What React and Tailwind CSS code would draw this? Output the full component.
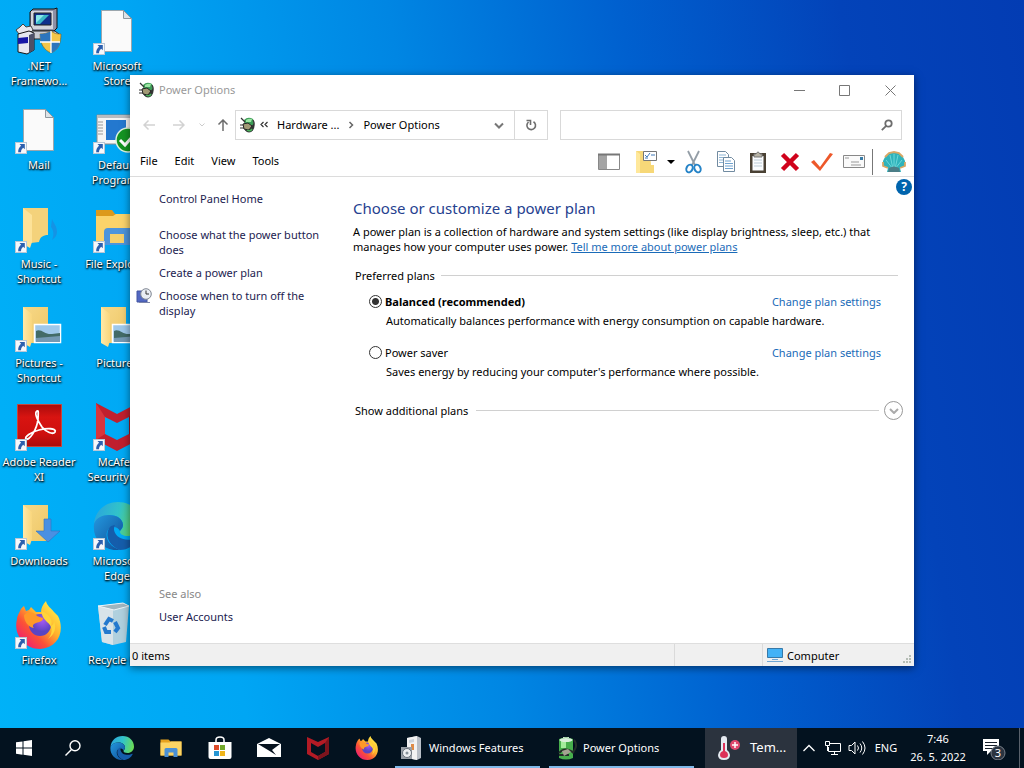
import { useState } from "react";

function ShortcutArrow() {
  return (
    <svg viewBox="0 0 12 12" className="absolute bottom-0 left-0 size-3">
      <rect width="12" height="12" fill="#f6f8fb" />
      <rect x=".5" y=".5" width="11" height="11" fill="none" stroke="#b9c7d6" />
      <path d="M4.500 2h5.300v5.300L8.200 5.800C6.700 7 6 8.300 6 10.200H3.200C3 7.500 4.200 5.200 6.100 3.700z" fill="#2c5fae" />
    </svg>
  );
}

function DotNetIcon() {
  return (
    <svg viewBox="0 0 48 48" className="size-12">
      <path d="M18 2h21l3-1v20l-3 3H15V5z" fill="#8d90a5" stroke="#111" />
      <path d="M16 4h22v18H16z" fill="#d4d5dd" />
      <path d="M19 6h17v12H19z" fill="#10308c" stroke="#222" />
      <path d="M21 8h13l-9 9h-4z" fill="#39b9c9" />
      <path d="M22 8h7l-8 8V9z" fill="#8ae8ea" />
      <path d="M12 24h28l5 4v4H18z" fill="#c9cad2" stroke="#222" />
      <path d="M5 20l3-3 3 3 5-1 2 4-4 4H4l-3-4z" fill="#e8e8ef" stroke="#444" />
      <path d="M3 27l11-3 5 2v17l-7 4-9-2z" fill="#e7e8f0" stroke="#161616" />
      <path d="M3 31l10-1v6l-10 1z" fill="#1717a6" />
      <path d="M14 28l5-2v17l-5 3z" fill="#4e5068" />
      <path d="M36 24c4 3 7 3 10 3 0 10-3 16-10 19-7-3-11-9-11-19 4 0 8-1 11-3z" fill="#f3c64a" stroke="#765d20" strokeWidth=".6" />
      <path d="M36 24v11H25.500L25 27c4 0 8-1 11-3zM36 35h9c-1 5-4 9-9 11z" fill="#2c75bd" />
      <path d="M36 24v22M25 35h20" stroke="#fff" strokeWidth="1.300" />
    </svg>
  );
}

function PageIcon() {
  return (
    <svg viewBox="0 0 48 48" className="size-12">
      <path d="M8.500 3.500h22l8 8v33h-30z" fill="#fafafa" stroke="#9ba6ad" />
      <path d="M30.500 3.500v8h8z" fill="#dde3e7" stroke="#8e979e" />
    </svg>
  );
}

function DefaultProgramsIcon() {
  return (
    <svg viewBox="0 0 48 48" className="size-12">
      <path d="M4 9h42v29H4z" fill="#f5f5f5" stroke="#8a8a8a" />
      <path d="M4 9h42v3H4z" fill="#b9bcc0" />
      <path d="M13 14h20v20H13z" fill="#2378cf" />
      <path d="M5 16h5M5 19h5M5 22h5M5 25h5M5 28h5" stroke="#999" />
      <circle cx="35" cy="34" r="12" fill="#159422" stroke="#dff2df" strokeWidth="1.500" />
      <path d="M27 34l5 5 8-9" fill="none" stroke="#fff" strokeWidth="3" />
    </svg>
  );
}

function OpenFolder({ children }) {
  return (
    <svg viewBox="0 0 48 48" className="size-12">
      <defs>
        <linearGradient id="folder-front" x1="0" x2="1" y1="0" y2="0">
          <stop offset="0" stopColor="#ffe9a8" />
          <stop offset="1" stopColor="#f9d67c" />
        </linearGradient>
        <linearGradient id="folder-back" x1="0" x2="1" y1="0" y2="1">
          <stop offset="0" stopColor="#f7d888" />
          <stop offset="1" stopColor="#eec765" />
        </linearGradient>
      </defs>
      <path d="M8 3h25v36H8z" fill="url(#folder-back)" />
      <path d="M8 3l9 7v27l-2 6-7-4z" fill="url(#folder-front)" />
      {children}
    </svg>
  );
}

function MusicIcon() {
  return (
    <svg viewBox="0 0 48 48" className="size-12">
      <path d="M37 14c2 5 5 7 5 13 0 3-2 6-5 8 2-5 2-9-1-13z" fill="#1593e4" />
      <path d="M8 3h25v27c-5 0-8 2-9 7l-8 1H8z" fill="#f4d27b" />
      <path d="M8 3l9 7v27l-2 6-7-4z" fill="#fde298" />
    </svg>
  );
}

function PicturesIcon() {
  return (
    <OpenFolder>
      <path d="M19.500 20.500h26v18h-26z" fill="#9fc8ea" stroke="#fff" strokeWidth="1.500" />
      <path d="M21 27c5-3 9 4 16 3l8-1v9H21z" fill="#436b67" />
      <path d="M21 34l24-2v6H21z" fill="#7599b3" />
    </OpenFolder>
  );
}

function DownloadsIcon() {
  return (
    <OpenFolder>
      <path d="M29 17h7v12h9L33 40 21 29h8z" fill="#4a90e2" stroke="#2f72c1" strokeWidth=".6" />
    </OpenFolder>
  );
}

function ExplorerIcon() {
  return (
    <svg viewBox="0 0 48 48" className="size-6">
      <path d="M3 7h16l4 4h22v28H3z" fill="#e6a21f" />
      <path d="M3 13h18l3-2h21v28H3z" fill="#fcd464" />
      <path d="M11 42V27q0-3 3-3h20q3 0 3 3v15h-8v-9H19v9z" fill="#4a90d5" />
    </svg>
  );
}

function DesktopExplorerIcon() {
  return (
    <svg viewBox="0 0 48 48" className="size-12">
      <path d="M3 5h16l3 4h24v29H3z" fill="#dc9a1c" />
      <path d="M3 11h17l3-2h23v29H3z" fill="#fbd36a" />
      <path d="M11 40V27q0-4 4-4h31v17z" fill="#4c94dc" />
      <path d="M17 29h14v9H17z" fill="#f5d06c" />
    </svg>
  );
}

function AdobeIcon() {
  return (
    <svg viewBox="0 0 48 48" className="size-12">
      <defs>
        <linearGradient id="adobe" x1="0" x2="0" y1="0" y2="1">
          <stop offset="0" stopColor="#a80c0c" />
          <stop offset=".3" stopColor="#d81411" />
          <stop offset=".7" stopColor="#cf100e" />
          <stop offset="1" stopColor="#a90c0c" />
        </linearGradient>
      </defs>
      <path d="M2.500 1.500h44v42h-44z" fill="url(#adobe)" stroke="#c8453b" />
      <path
        d="M22 8c-3 2 1 10 5 16 4 5 11 8 13 5 2-4-8-4-16-2-8 2-15 7-13 9 3 2 11-9 12-20 0-4 1-9-1-8z"
        fill="none"
        stroke="#fff"
        strokeWidth="1.800"
      />
    </svg>
  );
}

function McAfeeIcon() {
  return (
    <svg viewBox="0 0 48 48" className="size-12">
      <path d="M3 0l21 11L45 0v37L24 48 3 37zM12 14v17l12 6 12-6V14l-12 6z" fill="#c01f2e" fillRule="evenodd" />
      <path d="M3 0l9 14v17l-9 6z" fill="#d8353d" />
      <path d="M45 0l-9 14v17l9 6z" fill="#9a1622" />
    </svg>
  );
}

function McAfeeTaskIcon() {
  return (
    <svg viewBox="0 0 24 24" className="size-6">
      <path d="M1 1l11 5 11-5v17l-11 6-11-6zM5 7v9l7 4 7-4V7l-7 4z" fill="#b31b25" fillRule="evenodd" />
      <path d="M19 7l4-6v17l-11 6v-4l7-4z" fill="#7d141d" />
    </svg>
  );
}

function EdgeIcon({ className }) {
  return (
    <svg viewBox="0 0 48 48" className={className}>
      <defs>
        <linearGradient id="edge-top" x1="0" x2="1" y1=".3" y2=".5">
          <stop offset="0" stopColor="#2aa5dd" />
          <stop offset=".5" stopColor="#32c3c9" />
          <stop offset="1" stopColor="#6bdc55" />
        </linearGradient>
        <linearGradient id="edge-mid" x1="0" x2="1" y1="0" y2="1">
          <stop offset="0" stopColor="#2398df" />
          <stop offset="1" stopColor="#104d96" />
        </linearGradient>
      </defs>
      <path d="M1 22C2 9 12 0 25 0c14 0 23 10 23 21 0 8-6 13-13 13-5 0-8-2-8-4s3-3 3-7c0-6-6-10-13-10C9 13 3 17 1 22z" fill="url(#edge-top)" />
      <path d="M1 22c2-6 8-9 15-9 8 0 14 4 14 10 0 3-2 4-3 6-3-6-11-5-13 1-2 7 3 15 13 18C12 50-1 38 1 22z" fill="url(#edge-mid)" />
      <path d="M17 25c-6 8-1 19 10 23 8 0 15-5 18-11 1-2 0-2-2-1-9 4-20 1-22-8 0-2 0-4 1-5-2 0-4 1-5 2z" fill="#155dab" />
    </svg>
  );
}

function FirefoxIcon({ className }) {
  return (
    <svg viewBox="0 0 48 48" className={className}>
      <defs>
        <linearGradient id="fox-body" x1=".9" x2=".15" y1=".1" y2=".9">
          <stop offset="0" stopColor="#fff04b" />
          <stop offset=".4" stopColor="#ffb02c" />
          <stop offset=".7" stopColor="#fb5037" />
          <stop offset="1" stopColor="#ee1f72" />
        </linearGradient>
        <radialGradient id="fox-globe" cx=".6" cy=".3">
          <stop offset="0" stopColor="#a65af2" />
          <stop offset="1" stopColor="#5a44c2" />
        </radialGradient>
      </defs>
      <path d="M5 10c1-3 3-4 4-5l2 5 3-1 2-3 5 5h5c0-4 2-8 5-11 1 5 5 7 8 11l4 4c7 14 1 32-18 33C9 48-2 33 2 18c0-3 2-6 3-8z" fill="url(#fox-body)" />
      <circle cx="25" cy="24" r="11" fill="url(#fox-globe)" />
      <path d="M9 14c5-4 9-3 12 0 2 2 5 2 7 3 0 3-3 4-7 5-3 1-4 3-2 5-6-1-10-7-10-13z" fill="#ff9928" />
      <path d="M27 10c8 4 11 9 9 15 2-1 3-3 3-5 3 7 0 14-6 18 6-7 4-13-1-17-3-3-6-7-5-11z" fill="#ffd43a" />
    </svg>
  );
}

function RecycleIcon() {
  return (
    <svg viewBox="0 0 48 48" className="size-12">
      <path d="M5 5l25-3 6 3-3 36-13 3-11-3z" fill="#c3d4dc" opacity=".9" />
      <path d="M5 5l15 3v36L9 41z" fill="#d8e3e9" />
      <path d="M5 5l25-3 6 3-15 4z" fill="#9fb5bf" stroke="#eef5f8" />
      <path d="M12 24l4-6 4 2M22 21l3 6-3 4M18 31h-5l-2-5" fill="none" stroke="#2479ce" strokeWidth="4" />
    </svg>
  );
}

function PlugIcon() {
  return (
    <svg viewBox="0 0 16 16" className="size-4 shrink-0">
      <ellipse cx="10" cy="9" rx="5.500" ry="6.500" fill="#343c38" />
      <path d="M5 3q4-4 9-1l1 5q-3 3-9 1z" fill="#3d9c57" />
      <path d="M7 3q3-2 6-1l-1 3H7z" fill="#9ce5a3" />
      <path d="M2 1l4 4M1 8h4M1 11h4M14 3q3 5-2 9" fill="none" stroke="#333" strokeWidth="1.200" />
      <path d="M4 7l5-1 4 3-3 4-5-1z" fill="#a29a76" stroke="#252525" />
      <path d="M8 13q3 2 5-1" stroke="#49b35a" fill="none" strokeWidth="1.500" />
    </svg>
  );
}

const columns = [
  [
    { label: ".NET Framewo...", icon: <DotNetIcon /> },
    { label: "Mail", icon: <PageIcon />, shortcut: true },
    { label: "Music - Shortcut", icon: <MusicIcon />, shortcut: true },
    { label: "Pictures - Shortcut", icon: <PicturesIcon />, shortcut: true },
    { label: "Adobe Reader XI", icon: <AdobeIcon />, shortcut: true },
    { label: "Downloads", icon: <DownloadsIcon />, shortcut: true },
    { label: "Firefox", icon: <FirefoxIcon className="size-12" />, shortcut: true },
  ],
  [
    { label: "Microsoft Store", icon: <PageIcon />, shortcut: true },
    { label: "Default Programs", icon: <DefaultProgramsIcon />, shortcut: true },
    { label: "File Explorer", icon: <DesktopExplorerIcon />, shortcut: true },
    { label: "Pictures", icon: <PicturesIcon /> },
    { label: "McAfee Security S...", icon: <McAfeeIcon />, shortcut: true },
    { label: "Microsoft Edge", icon: <EdgeIcon className="size-12" />, shortcut: true },
    { label: "Recycle Bin", icon: <RecycleIcon /> },
  ],
];

function DesktopIcons() {
  return (
    <div className="flex gap-[2px] pl-px">
      {columns.map((items, i) => (
        <div key={i} className="flex w-[76px] flex-col">
          {items.map((item) => (
            <button key={item.label} className="flex h-[99px] flex-col items-center pt-[7px]">
              <span className="relative size-12">
                {item.icon}
                {item.shortcut && <ShortcutArrow />}
              </span>
              <span className="mt-[3px] text-center leading-[15px] text-white [text-shadow:0_1px_2px_#000,1px_1px_2px_#000]">
                {item.label}
              </span>
            </button>
          ))}
        </div>
      ))}
    </div>
  );
}

function TitleBar() {
  return (
    <header className="flex h-[30px] shrink-0 items-center pl-2 text-[#999]">
      <PlugIcon />
      <h1 className="ml-[5px] flex-1">Power Options</h1>
      <div className="flex text-[#777]">
        <button aria-label="Minimize" className="flex w-[45px] justify-center">
          <svg viewBox="0 0 11 11" className="size-[11px]" fill="none" stroke="currentColor"><path d="M0 5.500h11" /></svg>
        </button>
        <button aria-label="Maximize" className="flex w-[45px] justify-center">
          <svg viewBox="0 0 11 11" className="size-[11px]" fill="none" stroke="currentColor"><path d="M.5.5h10v10H.5z" /></svg>
        </button>
        <button aria-label="Close" className="flex w-[47px] justify-center">
          <svg viewBox="0 0 11 11" className="size-[11px]" fill="none" stroke="currentColor"><path d="M.5.5l10 10M10.500.5l-10 10" /></svg>
        </button>
      </div>
    </header>
  );
}

function NavArrow({ label, className, d }) {
  return (
    <button aria-label={label} className={className}>
      <svg viewBox="0 0 12 12" className="size-3" fill="none" stroke="currentColor" strokeWidth="1.500">
        <path d={d} />
      </svg>
    </button>
  );
}

function AddressBar() {
  return (
    <nav className="flex h-10 shrink-0 items-center pr-3 pl-[13px]">
      <NavArrow label="Back" className="w-[30px] text-[#d2d2d2]" d="M12 6H1M5.500 1.500L1 6l4.500 4.500" />
      <NavArrow label="Forward" className="w-[26px] text-[#d2d2d2]" d="M0 6h11M6.500 1.500L11 6l-4.500 4.500" />
      <button aria-label="Recent locations" className="w-[18px] text-[#ccc]">
        <svg viewBox="0 0 6 6" className="size-[6px]" fill="none" stroke="currentColor"><path d="M.5 1.500L3 4l2.500-2.500" /></svg>
      </button>
      <NavArrow label="Up" className="w-[18px] text-[#6d6d6d]" d="M6 12V1M1.500 5.500L6 1l4.500 4.500" />
      <div className="flex h-[30px] w-[313px] shrink-0 items-center border border-[#d9d9d9] pl-[3px]">
        <PlugIcon />
        <svg viewBox="0 0 8 8" className="mx-[5px] size-2" fill="none" stroke="#333" strokeWidth="1.200"><path d="M3.500 1L1 3.500 3.500 6M7.500 1L5 3.500 7.500 6" /></svg>
        <button className="ml-1 whitespace-nowrap">Hardware ...</button>
        <svg viewBox="0 0 6 8" className="mx-[9px] h-2 w-[6px]" fill="none" stroke="#666" strokeWidth="1.500"><path d="M1.500 1l3 3-3 3" /></svg>
        <button className="whitespace-nowrap">Power Options</button>
        <button aria-label="Previous locations" className="mr-[9px] ml-auto text-[#777]">
          <svg viewBox="0 0 12 12" className="size-3" fill="none" stroke="currentColor" strokeWidth="2"><path d="M2 4.500l4 4 4-4" /></svg>
        </button>
        <button aria-label="Refresh" className="flex h-full w-[33px] items-center justify-center border-l border-[#d9d9d9] text-[#6d6d6d]">
          <svg viewBox="0 0 12 12" className="size-3" fill="none" stroke="currentColor" strokeWidth="1.600">
            <path d="M8.500 2.700A4.300 4.300 0 1 1 3.500 3M1.500 1.500h4V6" />
          </svg>
        </button>
      </div>
      <label className="ml-3 flex h-[30px] flex-1 items-center border border-[#d9d9d9] pr-2">
        <input aria-label="Search" className="min-w-0 flex-1 px-2 outline-none" />
        <svg viewBox="0 0 12 12" className="size-3" fill="none" stroke="#6d6d6d" strokeWidth="1.800">
          <circle cx="7.500" cy="4.500" r="3.200" />
          <path d="M5.200 6.800L.8 11.200" />
        </svg>
      </label>
    </nav>
  );
}

function Tool({ label, children, className = "w-8" }) {
  return (
    <button aria-label={label} className={`flex justify-center ${className}`}>
      <svg viewBox="0 0 24 24" className="size-6">{children}</svg>
    </button>
  );
}

function MenuBar() {
  return (
    <div className="flex h-8 shrink-0 items-center border-b border-[#dcdcdc] pt-[2px] pr-[7px] pl-[10px]">
      <div className="flex flex-1 gap-[17px]">
        <button>File</button>
        <button>Edit</button>
        <button>View</button>
        <button>Tools</button>
      </div>
      <div className="flex items-center">
        <Tool label="Navigation pane" className="mr-1 w-[34px]">
          <path d="M1.500 4.500h21v15h-21z" fill="#fff" stroke="#888" />
          <path d="M2 5h8v14H2z" fill="#a4a4a4" />
          <path d="M1 4.500h22" stroke="#777" strokeWidth="2" />
        </Tool>
        <Tool label="Folder options" className="w-[34px]">
          <path d="M1 1h14l1 14h3v8H1z" fill="#f7d878" />
          <path d="M1 1l4 3v19H1z" fill="#ffe89b" />
          <path d="M8.500 1.500h13v9h-13z" fill="#fff" stroke="#777" />
          <path d="M10 5l2 2 3-4M16 5h4M10 8h3" fill="none" stroke="#3f78b7" />
        </Tool>
        <button aria-label="More layouts" className="flex w-[14px] justify-center">
          <svg viewBox="0 0 8 4" className="h-1 w-2"><path d="M0 0h8L4 4z" /></svg>
        </button>
        <Tool label="Cut">
          <path d="M6 1l7 14M17 1l-7 14" stroke="#939da6" strokeWidth="1.800" />
          <ellipse cx="7.500" cy="18.500" rx="3" ry="4" transform="rotate(25 7.500 18.500)" fill="none" stroke="#2583c7" strokeWidth="2" />
          <ellipse cx="15.500" cy="18.500" rx="3" ry="4" transform="rotate(-25 15.500 18.500)" fill="none" stroke="#2583c7" strokeWidth="2" />
        </Tool>
        <Tool label="Copy">
          <path d="M3.500 1.500h8l3 3v12h-11z" fill="#fff" stroke="#718ba1" />
          <path d="M5 5h7M5 7.500h7M5 10h7M5 12.500h7" stroke="#8db5d6" />
          <path d="M9.500 7.500h8l3 3v11h-11z" fill="#fff" stroke="#718ba1" />
          <path d="M11 11h6M11 13.500h8M11 16h8M11 18.500h8" stroke="#6fa2cf" />
        </Tool>
        <Tool label="Paste">
          <path d="M4 3h16v20H4z" fill="#4a4134" />
          <path d="M6.500 6h11v14.500h-11z" fill="#fafcfe" />
          <path d="M8 4h2q2-4 4 0h2v3H8z" fill="#b8b3a5" stroke="#777" />
          <path d="M8 10h8M8 13h8M8 16h8" stroke="#bccbd6" />
        </Tool>
        <Tool label="Delete">
          <path d="M4.500 4.500l15 15M19.500 4.500l-15 15" stroke="#d0021b" strokeWidth="4.500" />
        </Tool>
        <Tool label="Properties">
          <path d="M1 12l3-2 6 7L20 3l3 1-13 17z" fill="#ed582a" />
        </Tool>
        <Tool label="Rename">
          <path d="M1.500 5.500h21v12h-21z" fill="#fafafa" stroke="#888" />
          <path d="M3 8h4M9 12h8M9 15h10" stroke="#999" />
          <path d="M18 7h3v3h-3z" fill="#397da8" />
        </Tool>
        <span className="mx-[2px] h-[26px] w-px bg-[#777]" />
        <Tool label="Shell options" className="ml-[6px] w-[26px]">
          <path d="M6 18l-5-2v-5l2-4 4-4 5-1 5 1 4 4 2 4v5l-5 2 1 4H5z" fill="#2fb3bb" />
          <path d="M1 12v4l5 2M23 12v4l-5 2M3 7l4-4 5-1 5 1 4 4" fill="none" stroke="#d9a765" strokeWidth="1.800" />
          <path d="M11 19L4 10M11 19L8 5M12 19V4M13 19l3-14M13 19l7-9" stroke="#6cd7d9" />
          <path d="M7 18q5-3 10 0l1 4H6z" fill="#4c7e87" />
        </Tool>
      </div>
    </div>
  );
}

function Sidebar() {
  return (
    <aside className="flex w-[223px] shrink-0 flex-col pt-[14px] pr-6 pb-[19px] pl-[29px] leading-[15px] text-[#1c1c50]">
      <a href="#home">Control Panel Home</a>
      <a href="#button" className="mt-[21px]">Choose what the power button does</a>
      <a href="#create" className="mt-2">Create a power plan</a>
      <a href="#display" className="relative mt-2">
        <svg viewBox="0 0 16 16" className="absolute top-0 -left-[23px] size-4">
          <path d="M1 3h10v11H1z" fill="#5368c2" stroke="#4354a2" />
          <path d="M3 14h11v1H3z" fill="#7d86aa" />
          <circle cx="10" cy="6" r="5.300" fill="#e9edf3" stroke="#818894" />
          <path d="M10 2.500V6h3" fill="none" stroke="#333" />
        </svg>
        Choose when to turn off the display
      </a>
      <p className="mt-auto text-[#888]">See also</p>
      <a href="#accounts" className="mt-2">User Accounts</a>
    </aside>
  );
}

const plans = [
  {
    id: "balanced",
    name: "Balanced (recommended)",
    text: "Automatically balances performance with energy consumption on capable hardware.",
  },
  {
    id: "saver",
    name: "Power saver",
    text: "Saves energy by reducing your computer's performance where possible.",
  },
];

function PowerPlans() {
  const [selected, setSelected] = useState("balanced");

  return (
    <main className="relative min-w-0 flex-1 pt-5 leading-[15px]">
      <button aria-label="Help" className="absolute top-[2px] right-[2px] size-4 rounded-full bg-[#0064ad] text-center text-xs leading-4 font-bold text-white">
        ?
      </button>
      <h2 className="text-[15px] leading-[22px] text-[#26418f]">Choose or customize a power plan</h2>
      <p className="mt-[5px] pr-7">
        A power plan is a collection of hardware and system settings (like display brightness, sleep, etc.) that manages how your computer uses power.{" "}
        <a href="#more" className="text-[#1a6bb8] underline">Tell me more about power plans</a>
      </p>

      <fieldset className="pr-4 pl-[2px]">
        <legend className="flex w-full items-center gap-[6px] pt-[14px]">
          Preferred plans
          <span className="h-px flex-1 bg-[#d0d0d0]" />
        </legend>
        {plans.map((plan) => (
          <div key={plan.id} className="mt-[11px] mb-[17px] pr-[17px] pl-[14px]">
            <div className="flex items-center">
              <input
                type="radio"
                id={plan.id}
                name="plan"
                checked={selected === plan.id}
                onChange={() => setSelected(plan.id)}
                className="size-[13px] appearance-none rounded-full border border-[#333] bg-white checked:bg-[radial-gradient(circle,#333_3px,#fff_4px)]"
              />
              <label htmlFor={plan.id} className={selected === plan.id ? "ml-[3px] flex-1 font-bold" : "ml-[3px] flex-1"}>
                {plan.name}
              </label>
              <a href="#settings" className="text-[#1a6bb8]">Change plan settings</a>
            </div>
            <p className="mt-1 ml-[17px]">{plan.text}</p>
          </div>
        ))}
      </fieldset>

      <div className="mt-[5px] flex items-center pr-[11px] pl-[2px]">
        Show additional plans
        <span className="mr-[5px] ml-2 h-px flex-1 bg-[#d0d0d0]" />
        <button aria-label="Show additional plans" className="flex size-[19px] items-center justify-center rounded-full border border-[#999]">
          <svg viewBox="0 0 10 6" className="h-[6px] w-[10px]" fill="none" stroke="#aaa" strokeWidth="2"><path d="M1 1l4 4 4-4" /></svg>
        </button>
      </div>
    </main>
  );
}

function StatusBar() {
  return (
    <footer className="flex h-[23px] shrink-0 items-stretch border-t border-[#dedede] bg-[#f0f0f0] leading-[23px]">
      <span className="flex-1 pl-[2px]">0 items</span>
      <span className="w-[88px] border-l border-[#dadada]" />
      <span className="relative flex w-[152px] items-center gap-1 border-l border-[#dadada] pl-1">
        <svg viewBox="0 0 16 16" className="size-4">
          <path d="M.5 1.500h15v9H.5z" fill="#43b2f6" stroke="#3779a8" />
          <path d="M5 12.500h6M0 14.500h16" stroke="#6fa6d4" />
        </svg>
        Computer
        <svg viewBox="0 0 9 9" className="absolute right-[2px] bottom-[2px] size-[9px]" fill="#b5bdb5">
          <path d="M6 0h2v2H6zM3 3h2v2H3zM6 3h2v2H6zM0 6h2v2H0zM3 6h2v2H3zM6 6h2v2H6z" />
        </svg>
      </span>
    </footer>
  );
}

function PowerWindow() {
  return (
    <section className="absolute top-[75px] right-[110px] bottom-[62px] left-[130px] flex flex-col bg-white text-black shadow-[0_2px_8px_rgba(0,0,0,0.5)]">
      <TitleBar />
      <AddressBar />
      <MenuBar />
      <div className="flex min-h-0 flex-1">
        <Sidebar />
        <PowerPlans />
      </div>
      <StatusBar />
    </section>
  );
}

function TaskButton({ label, className = "w-[49px]", children }) {
  return (
    <button aria-label={label} className={`flex h-full items-center justify-center ${className}`}>
      {children}
    </button>
  );
}

function Taskbar() {
  return (
    <footer className="flex h-10 shrink-0 items-center bg-[#03121f] text-white">
      <TaskButton label="Start" className="w-12">
        <svg viewBox="0 0 16 16" className="size-4" fill="#fff"><path d="M0 2.300L6.500 1.400v6.200H0zM7.500 1.200L16 0v7.600H7.500zM0 8.500h6.500v6.200L0 13.800zM7.500 8.500H16V16l-8.500-1.200z" /></svg>
      </TaskButton>
      <TaskButton label="Search">
        <svg viewBox="0 0 16 16" className="size-4" fill="none" stroke="#fff" strokeWidth="1.400"><circle cx="10" cy="5.800" r="5" /><path d="M6.500 9.500L.5 15.500" /></svg>
      </TaskButton>
      <TaskButton label="Microsoft Edge"><EdgeIcon className="size-6" /></TaskButton>
      <TaskButton label="File Explorer"><ExplorerIcon /></TaskButton>
      <TaskButton label="Microsoft Store">
        <svg viewBox="0 0 24 24" className="size-6">
          <path d="M8 8V4q0-3 4-3t4 3v4" fill="none" stroke="#fff" strokeWidth="1.500" />
          <path d="M.5 6h23v15q0 2-2 2h-19q-2 0-2-2z" fill="#fff" />
          <path d="M6 9h5v5H6z" fill="#dd4b2a" /><path d="M12 9h5v5h-5z" fill="#72a82a" />
          <path d="M6 15h5v5H6z" fill="#2696d4" /><path d="M12 15h5v5h-5z" fill="#f0b51b" />
        </svg>
      </TaskButton>
      <TaskButton label="Mail">
        <svg viewBox="0 0 24 20" className="h-5 w-6">
          <path d="M0 6l12-6 12 6v13H0z" fill="#fff" />
          <path d="M1 6h22l-8 6 4 5-8-5z" fill="#07131f" />
        </svg>
      </TaskButton>
      <TaskButton label="McAfee"><McAfeeTaskIcon /></TaskButton>
      <TaskButton label="Firefox"><FirefoxIcon className="size-6" /></TaskButton>
      <button className="ml-1 flex h-full w-[145px] items-center gap-[5px] border-b-2 border-[#7fb8e8] pt-[2px] pl-[5px]">
        <svg viewBox="0 0 24 24" className="size-6">
          <path d="M7 2l10-2 4 2v20l-4 2-10-2z" fill="#b8bec6" />
          <path d="M7 2l10-2v24L7 22z" fill="#f2f2f2" />
          <path d="M9 4l5-1v3l-5 1z" fill="#ccd3db" /><path d="M11 8h3v6h-3z" fill="#df8b47" />
          <path d="M1 11h11v12H1z" fill="#999fa6" />
          <circle cx="7" cy="17" r="4.500" fill="#eef0f2" stroke="#68717a" /><circle cx="7" cy="17" r="1.500" fill="#87929a" />
        </svg>
        Windows Features
      </button>
      <button className="ml-[9px] flex h-full w-[145px] items-center gap-[5px] border-b-2 border-[#7fb8e8] pt-[2px] pl-[5px]">
        <svg viewBox="0 0 24 24" className="size-6">
          <path d="M9 1h6v3H9z" fill="#dce8df" />
          <path d="M5 3q7-3 14 0v19q-7 3-14 0z" fill="#47ae4c" />
          <path d="M7 4q4-2 5 0v8H7z" fill="#a4eb9c" />
          <ellipse cx="12" cy="4" rx="6.500" ry="2" fill="#daeddb" />
          <path d="M5 17q6-7 15 0M5 19h10M20 4q5 6-2 13" fill="none" stroke="#252e29" strokeWidth="2" />
          <path d="M8 15l6-2 3 3-7 4z" fill="#a5a391" />
        </svg>
        Power Options
      </button>
      <button className="ml-auto flex h-full w-[92px] items-center bg-[#2b333e] pl-3 text-[13px]">
        <svg viewBox="0 0 24 24" className="mr-[9px] size-6">
          <path d="M4 3q0-3 3-3t3 3v11q3 2 3 5 0 5-6 5t-6-5q0-3 3-5z" fill="#e5eaf0" />
          <path d="M6 7h2v8q3 1 3 4 0 3-4 3t-4-3q0-3 3-4z" fill="#dd3158" />
          <circle cx="18" cy="9" r="5" fill="#df476d" /><path d="M18 6v6M15 9h6" stroke="#fff" strokeWidth="1.500" />
        </svg>
        Tem...
      </button>
      <button aria-label="Show hidden icons" className="flex w-6 justify-center">
        <svg viewBox="0 0 12 8" className="h-2 w-3" fill="none" stroke="#fff" strokeWidth="1.300"><path d="M.5 7L6 1.500 11.500 7" /></svg>
      </button>
      <button aria-label="Network" className="flex w-6 justify-center">
        <svg viewBox="0 0 16 16" className="size-4" fill="none" stroke="#fff"><path d="M5 3.500h10.500v8H3.500V7M9.500 12v2.500M6 14.500h7M.5 1.500h4v4h-4zM2.500 6v5" /></svg>
      </button>
      <button aria-label="Volume" className="flex w-6 justify-center">
        <svg viewBox="0 0 18 16" className="h-4 w-[18px]" fill="none" stroke="#fff"><path d="M1 5.500h2.500L7 2v12l-3.500-3.500H1zM9.500 5.500q2 2.500 0 5M12 3.500q3.500 4.500 0 9M14.500 1.500q5 6.500 0 13" /></svg>
      </button>
      <span className="w-[34px] text-center">ENG</span>
      <time className="w-[70px] text-center leading-[18px] whitespace-nowrap">7:46<br />26. 5. 2022</time>
      <button aria-label="Notifications" className="relative ml-[9px] mr-[13px] size-6">
        <svg viewBox="0 0 24 24" className="size-6">
          <path d="M1 3h16v12H9l-4 4v-4H1z" fill="#fff" />
          <path d="M3 6.500h12M3 9.500h12M3 12.500h8" stroke="#17202b" />
          <circle cx="16" cy="17" r="7" fill="#2b3440" stroke="#777f88" />
        </svg>
        <span className="absolute right-0 -bottom-px size-4 text-center leading-4">3</span>
      </button>
      <span className="mr-1 h-full w-px bg-[#59616b]" />
    </footer>
  );
}

export default function App() {
  return (
    <div className="flex h-screen flex-col overflow-hidden bg-[linear-gradient(80deg,#00b2f8_0%,#00a6f4_22%,#0086e3_45%,#0060cf_65%,#0343b9_84%,#033cb3_100%)] font-['Noto_Sans',sans-serif] text-[11px]">
      <div className="relative min-h-0 flex-1">
        <DesktopIcons />
        <PowerWindow />
      </div>
      <Taskbar />
    </div>
  );
}
